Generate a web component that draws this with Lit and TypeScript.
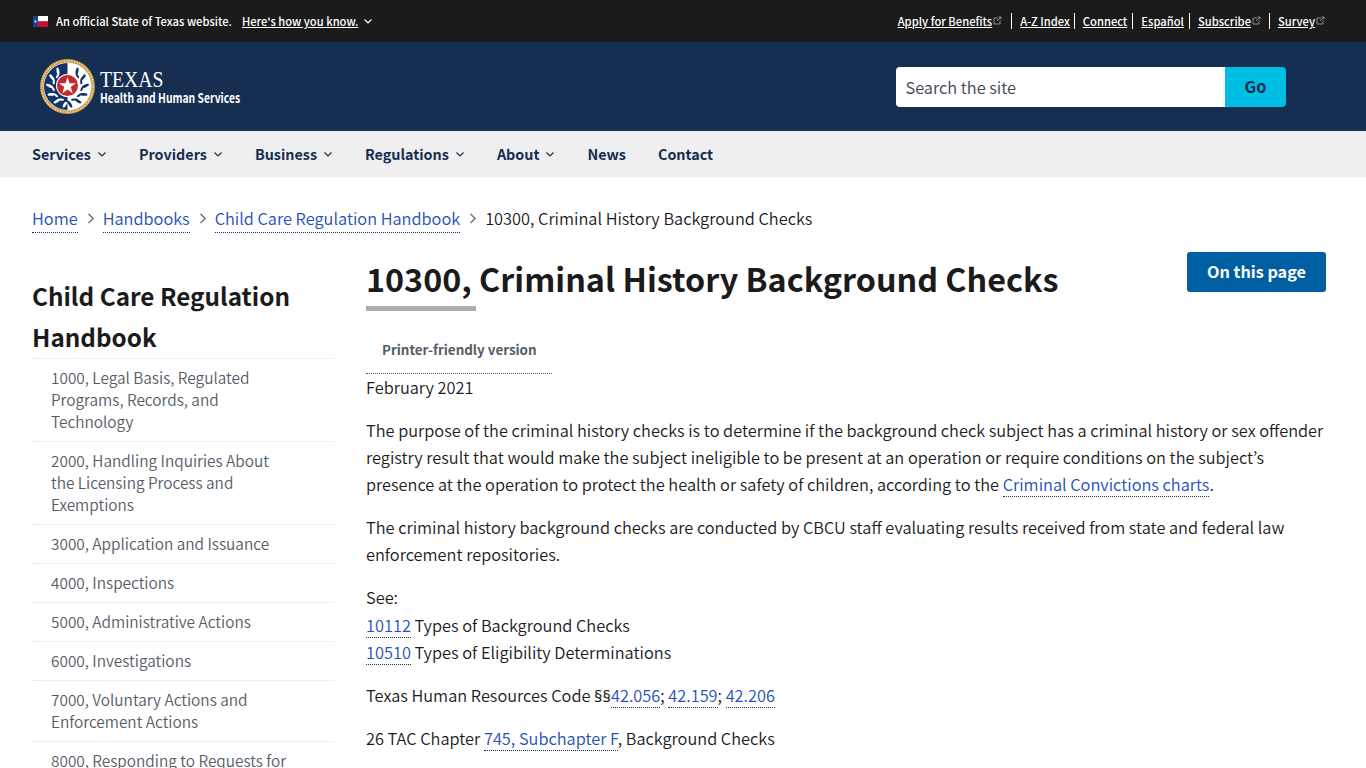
import { LitElement, html, css, svg } from 'lit';
import { customElement } from 'lit/decorators.js';

const topLinks = [
  { label: 'Apply for Benefits', cls: 'haslink', ext: true },
  { label: 'A-Z Index', cls: 'narrow' },
  { label: 'Connect' },
  { label: 'Español' },
  { label: 'Subscribe', cls: 'tight', ext: true },
  { label: 'Survey', cls: 'last', ext: true },
];

const navItems = [
  { label: 'Services', sub: true },
  { label: 'Providers', sub: true },
  { label: 'Business', sub: true },
  { label: 'Regulations', sub: true },
  { label: 'About', sub: true },
  { label: 'News' },
  { label: 'Contact' },
];

const sideItems = [
  '1000, Legal Basis, Regulated Programs, Records, and Technology',
  '2000, Handling Inquiries About the Licensing Process and Exemptions',
  '3000, Application and Issuance',
  '4000, Inspections',
  '5000, Administrative Actions',
  '6000, Investigations',
  '7000, Voluntary Actions and Enforcement Actions',
  '8000, Responding to Requests for Information',
];

const chevron = (size: number, color: string) => html`
  <svg width=${size} height=${size} viewBox="0 0 10 10" fill="none" stroke=${color} stroke-width="1.2">
    <path d="M1.5 3.5 5 7l3.5-3.5" />
  </svg>
`;

const extIcon = html`
  <svg class="ext" width="9" height="9" viewBox="0 0 9 9" fill="none" stroke="#9a9a9a" stroke-width="0.9">
    <path d="M5 2H1v6h6V4.5" />
    <path d="M4 5l4-4M5.5 1H8v2.5" />
  </svg>
`;

// wreath leaves for the seal, mirrored left/right
const leaves = (color: string, flip: boolean) => {
  const out = [];
  for (let i = 0; i < 6; i++) {
    const deg = -58 + i * 28;
    const a = (deg * Math.PI) / 180;
    const x = 27.5 + (flip ? -1 : 1) * 18 * Math.cos(a);
    const y = 27.5 + 18 * Math.sin(a);
    const rot = (flip ? -1 : 1) * (deg + 90) + (flip ? 22 : -22);
    out.push(svg`<ellipse cx=${x} cy=${y} rx="1.4" ry="3.8" fill=${color} transform="rotate(${rot} ${x} ${y})" />`);
    const x2 = 27.5 + (flip ? -1 : 1) * 14.5 * Math.cos(a + 0.2);
    const y2 = 27.5 + 14.5 * Math.sin(a + 0.2);
    out.push(svg`<ellipse cx=${x2} cy=${y2} rx="1.1" ry="2.6" fill=${color} transform="rotate(${rot + (flip ? 40 : -40)} ${x2} ${y2})" />`);
  }
  return out;
};

const seal = html`
  <svg class="seal" width="55" height="55" viewBox="0 0 55 55">
    <circle cx="27.5" cy="27.5" r="27.5" fill="#c79a4b" />
    <circle cx="27.5" cy="27.5" r="25.8" fill="none" stroke="#f6e8c8" stroke-width="1.3" stroke-dasharray="1.3 1.3" />
    <circle cx="27.5" cy="27.5" r="24" fill="#fff" />
    <path d="M27.5 4a23.5 23.5 0 0 0 0 47z" fill="#14336b" />
    ${leaves('#fff', true)}
    ${leaves('#14336b', false)}
    <circle cx="27.5" cy="26.5" r="11.5" fill="#fff" />
    <circle cx="27.5" cy="26.5" r="10.5" fill="#c5282f" />
    <path d="M27.5 18l2 6.2h6.5l-5.3 3.9 2 6.2-5.2-3.8-5.2 3.8 2-6.2-5.3-3.9h6.5z" fill="#fff" />
  </svg>
`;

const flag = html`
  <svg class="flag" width="15" height="11" viewBox="0 0 15 11">
    <rect width="15" height="5.5" fill="#fff" />
    <rect y="5.5" width="15" height="5.5" fill="#c8102e" />
    <rect width="5" height="11" fill="#1c3f94" />
    <circle cx="2.5" cy="5.5" r="1" fill="#fff" />
  </svg>
`;

@customElement('app-root')
export class AppRoot extends LitElement {
  static styles = css`
    :host {
      display: block;
      height: 768px;
      overflow: hidden;
      background: #fff;
      color: #1b1b1b;
      font-family: 'Noto Sans CJK JP', 'Noto Sans', sans-serif;
      font-size: 16.35px;
      line-height: 27px;
      font-weight: 350;
    }
    a {
      color: inherit;
      text-decoration: none;
    }

    .topbar {
      height: 42px;
      background: #1b1b1b;
      color: #fff;
      display: flex;
      align-items: center;
      justify-content: space-between;
      padding: 0 41px 0 33px;
      font-size: 11.2px;
      line-height: 16px;
      font-weight: 500;
    }
    .official {
      display: flex;
      align-items: center;
    }
    .flag {
      margin-right: 8px;
    }
    .official a {
      margin-left: 10px;
      margin-right: 5px;
      text-decoration: underline;
    }
    .toplinks {
      display: flex;
      align-items: center;
    }
    .toplinks a {
      display: flex;
      padding-right: 5px;
      margin-right: 8px;
      border-right: 1px solid #fff;
      height: 16px;
    }
    .toplinks a.haslink {
      padding-right: 9px;
    }
    .toplinks a.narrow {
      padding-right: 4px;
    }
    .toplinks a.tight {
      padding-right: 8px;
    }
    .toplinks a.last {
      border-right: 0;
      padding-right: 0;
      margin-right: 0;
    }
    .toplinks span {
      text-decoration: underline;
    }
    .ext {
      margin: 3px 0 0 1px;
    }

    .masthead {
      height: 89px;
      background: #162e51;
      display: flex;
      align-items: center;
      justify-content: space-between;
      padding: 0 80px 0 40px;
    }
    .logo {
      display: flex;
      align-items: center;
      color: #fff;
    }
    .wordmark {
      margin-left: 5px;
      display: flex;
      flex-direction: column;
    }
    .texas {
      font-family: 'Liberation Serif', serif;
      font-size: 24px;
      line-height: 22px;
      transform: scaleX(0.82);
      transform-origin: left;
    }
    .hhs {
      font-size: 13px;
      line-height: 15px;
      font-weight: 700;
      transform: scaleX(0.795);
      transform-origin: left;
      white-space: nowrap;
    }
    .search {
      display: flex;
      width: 390px;
      height: 40px;
      border-radius: 4px;
      overflow: hidden;
    }
    .search .field {
      flex: 1;
      background: #fff;
      color: #3d4551;
      padding-left: 9.5px;
      line-height: 41px;
    }
    .search .go {
      width: 61px;
      background: #00bde3;
      color: #162e51;
      font-weight: 700;
      text-align: center;
      line-height: 39px;
    }

    .nav {
      box-sizing: border-box;
      height: 46px;
      background: #efefef;
      display: flex;
      align-items: center;
      gap: 32px;
      padding: 0 32px 2px;
      color: #162e51;
      font-size: 14.35px;
      font-weight: 700;
    }
    .nav a {
      display: flex;
      align-items: center;
      gap: 6px;
    }
    .nav svg {
      margin-top: 2px;
    }

    .crumbs {
      display: flex;
      align-items: center;
      gap: 6px;
      padding: 28px 32px 0;
      height: 27px;
      white-space: nowrap;
    }
    .link {
      color: #2450b8;
      border-bottom: 1px dotted #162e51;
    }
    .crumbs svg {
      transform: rotate(-90deg);
    }

    .layout {
      display: grid;
      grid-template-columns: 302px 1fr;
      gap: 32px;
      padding: 20px 40px 0 32px;
    }

    .side h2 {
      margin: 23px 0 1px;
      font-size: 24.3px;
      line-height: 41px;
      font-weight: 700;
    }
    .side ul {
      list-style: none;
      margin: 0;
      padding: 0;
      border-top: 1px dotted #dfe1e2;
    }
    .side li {
      padding: 7px 45px 9px 19px;
      border-bottom: 1px dotted #dfe1e2;
      font-size: 15.39px;
      line-height: 22px;
      color: #565c65;
    }

    .heading {
      display: flex;
      justify-content: space-between;
      align-items: flex-start;
    }
    h1 {
      margin: 4px 0 0;
      font-size: 32.3px;
      line-height: 45px;
      font-weight: 700;
      padding-bottom: 5px;
    }
    .rule {
      display: block;
      width: 110px;
      height: 5px;
      background: #a9aeb1;
    }
    .button {
      width: 139px;
      height: 40px;
      background: #005ea2;
      color: #fff;
      font-size: 16.2px;
      font-weight: 700;
      border-radius: 3px;
      text-align: center;
      line-height: 38px;
    }
    .printer {
      width: 170px;
      margin-top: 28px;
      padding: 0 0 14px 16px;
      border-bottom: 1px dotted #565c65;
      font-size: 13.4px;
      line-height: 20px;
      font-weight: 700;
      color: #565c65;
    }
    .main p {
      margin: 0 0 16px;
    }
    .see {
      display: block;
      padding-bottom: 1px;
    }
    .sect {
      font-family: 'Noto Sans', sans-serif;
      font-size: 16.5px;
      font-weight: 400;
    }
  `;

  render() {
    return html`
      <div class="topbar">
        <div class="official">
          ${flag}
          An official State of Texas website.
          <a href="#">Here's how you know.</a>
          ${chevron(10, '#fff')}
        </div>
        <div class="toplinks">
          ${topLinks.map(
            (l) => html`<a href="#" class=${l.cls ?? ''}><span>${l.label}</span>${l.ext ? extIcon : ''}</a>`
          )}
        </div>
      </div>

      <div class="masthead">
        <a class="logo" href="#">
          ${seal}
          <div class="wordmark">
            <span class="texas">TEXAS</span>
            <span class="hhs">Health and Human Services</span>
          </div>
        </a>
        <div class="search">
          <div class="field">Search the site</div>
          <div class="go">Go</div>
        </div>
      </div>

      <nav class="nav">
        ${navItems.map(
          (n) => html`<a href="#">${n.label}${n.sub ? chevron(10, '#162e51') : ''}</a>`
        )}
      </nav>

      <div class="crumbs">
        <a class="link" href="#">Home</a>
        ${chevron(13, '#71767a')}
        <a class="link" href="#">Handbooks</a>
        ${chevron(13, '#71767a')}
        <a class="link" href="#">Child Care Regulation Handbook</a>
        ${chevron(13, '#71767a')}
        <span>10300, Criminal History Background Checks</span>
      </div>

      <div class="layout">
        <aside class="side">
          <h2>Child Care Regulation Handbook</h2>
          <ul>
            ${sideItems.map((s) => html`<li>${s}</li>`)}
          </ul>
        </aside>
        <main class="main">
          <div class="heading">
            <h1>10300, Criminal History Background Checks</h1>
            <a class="button" href="#">On this page</a>
          </div>
          <span class="rule"></span>
          <div class="printer">Printer-friendly version</div>
          <p>February 2021</p>
          <p>
            The purpose of the criminal history checks is to determine if the background check subject has a
            criminal history or sex offender registry result that would make the subject ineligible to be present
            at an operation or require conditions on the subject’s presence at the operation to protect the health
            or safety of children, according to the <a class="link" href="#">Criminal Convictions charts</a>.
          </p>
          <p>
            The criminal history background checks are conducted by CBCU staff evaluating results received from
            state and federal law enforcement repositories.
          </p>
          <p>
            <span class="see">See:</span>
            <a class="link" href="#">10112</a> Types of Background Checks<br />
            <a class="link" href="#">10510</a> Types of Eligibility Determinations
          </p>
          <p>
            Texas Human Resources Code <span class="sect">§§</span><a class="link" href="#">42.056</a>;
            <a class="link" href="#">42.159</a>; <a class="link" href="#">42.206</a>
          </p>
          <p>26 TAC Chapter <a class="link" href="#">745, Subchapter F</a>, Background Checks</p>
        </main>
      </div>
    `;
  }
}
